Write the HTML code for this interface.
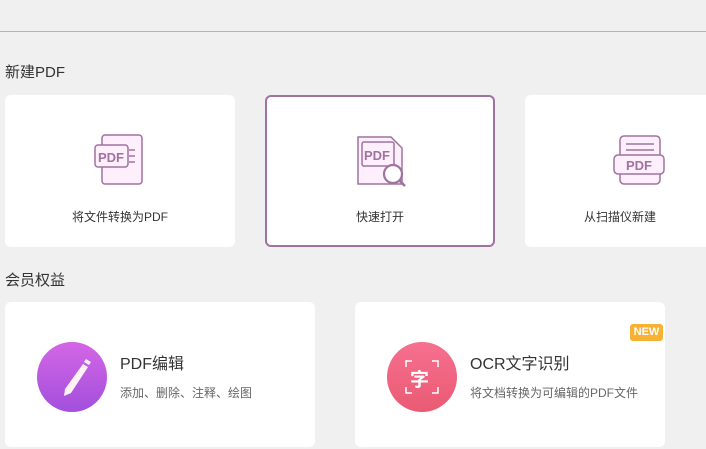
<!DOCTYPE html>
<html><head><meta charset="utf-8"><style>
*{margin:0;padding:0;box-sizing:border-box}
body{width:706px;height:449px;background:#f0f0f0;position:relative;overflow:hidden;font-family:"Liberation Sans","Noto Sans CJK SC",sans-serif;color:#333}
.line{position:absolute;left:0;top:31px;width:706px;height:1px;background:#b4b4b4}
.h{position:absolute;left:5px;font-size:15px;color:#333}
.c{position:absolute;background:#fff;border-radius:6px}
.lbl{position:absolute;left:0;right:0;top:113px;text-align:center;font-size:12px;color:#333}
.ic{position:absolute;top:38px;left:50%;margin-left:-26px}
.circ{position:absolute;left:32px;top:40px;width:70px;height:70px;border-radius:50%}
.t{position:absolute;left:115px;top:48px;font-size:16px;color:#333}
.s{position:absolute;left:115px;top:82px;font-size:12px;color:#666}
</style></head><body>
<div class="line"></div>
<div class="h" style="top:61px">新建PDF</div>
<div class="c" style="left:5px;top:95px;width:230px;height:152px">
<svg class="ic" width="52" height="54" viewBox="0 0 52 54"><rect x="8" y="2" width="40" height="49" rx="3" fill="#fdf0fc" stroke="#a0729f" stroke-width="1.5"/><rect x="1" y="12" width="33" height="22" rx="3" fill="#fdf0fc" stroke="#a0729f" stroke-width="1.5"/><text x="4" y="29" font-size="13" font-weight="bold" fill="#a0729f" font-family="Liberation Sans">PDF</text><path d="M35 17h6M35 23h6M35 29h6" stroke="#a0729f" stroke-width="1.5"/></svg>
<div class="lbl">将文件转换为PDF</div></div>
<div class="c" style="left:265px;top:95px;width:230px;height:152px;border:2px solid #a0729f">
<svg class="ic" style="top:37px;margin-left:-27px" width="56" height="56" viewBox="0 0 56 56"><path d="M5 3h33l11 11v36H5z" fill="#fdf0fc" stroke="#a0729f" stroke-width="1.5"/><rect x="9" y="8" width="32" height="24" rx="2" fill="#fdf0fc" stroke="#a0729f" stroke-width="1.5"/><text x="11" y="26" font-size="13" font-weight="bold" fill="#a0729f" font-family="Liberation Sans">PDF</text><circle cx="40" cy="40" r="9" fill="#fff" stroke="#a0729f" stroke-width="2.2"/><path d="M46 46l6 6" stroke="#a0729f" stroke-width="2.5"/></svg>
<div class="lbl" style="top:111px">快速打开</div></div>
<div class="c" style="left:525px;top:95px;width:190px;height:152px">
<svg style="position:absolute;left:88px;top:40px" width="54" height="52" viewBox="0 0 54 52"><rect x="7" y="1" width="40" height="48" rx="4" fill="#fdf0fc" stroke="#a0729f" stroke-width="1.5"/><path d="M13 9h28M13 15h28" stroke="#a0729f" stroke-width="1.5"/><rect x="1" y="20" width="50" height="19" rx="4" fill="#fdf0fc" stroke="#a0729f" stroke-width="1.5"/><text x="13" y="35" font-size="13" font-weight="bold" fill="#a0729f" font-family="Liberation Sans">PDF</text></svg>
<div class="lbl" style="left:0;width:190px;right:auto">从扫描仪新建</div></div>
<div class="h" style="top:269px">会员权益</div>
<div class="c" style="left:5px;top:302px;width:310px;height:145px">
<div class="circ" style="background:linear-gradient(#d466e6,#a24fdc)"><svg width="70" height="70" viewBox="0 0 70 70"><path d="M46 22l5 3-17 26-7 3 1-7z" fill="#fdf3f6"/><path d="M47 20l2-3 5 3-2 3z" fill="#fdf3f6"/></svg></div>
<div class="t">PDF编辑</div><div class="s">添加、删除、注释、绘图</div></div>
<div class="c" style="left:355px;top:302px;width:310px;height:145px">
<div class="circ" style="background:linear-gradient(#f6708f,#ea5a73)"><svg width="70" height="70" viewBox="0 0 70 70" fill="none" stroke="#fff" stroke-width="1.5"><path d="M19 25v-6h6M45 19h6v6M51 45v6h-6M25 51h-6v-6"/><text x="23" y="44" font-size="19" font-weight="bold" fill="#fff" stroke="none" font-family="Noto Sans CJK SC">字</text></svg></div>
<div class="t">OCR文字识别</div><div class="s">将文档转换为可编辑的PDF文件</div>
<div style="position:absolute;left:275px;top:22px;width:33px;height:17px;background:#f7b133;border-radius:3px;color:#fff;font-size:11px;font-weight:bold;text-align:center;line-height:17px">NEW</div></div>
</body></html>
